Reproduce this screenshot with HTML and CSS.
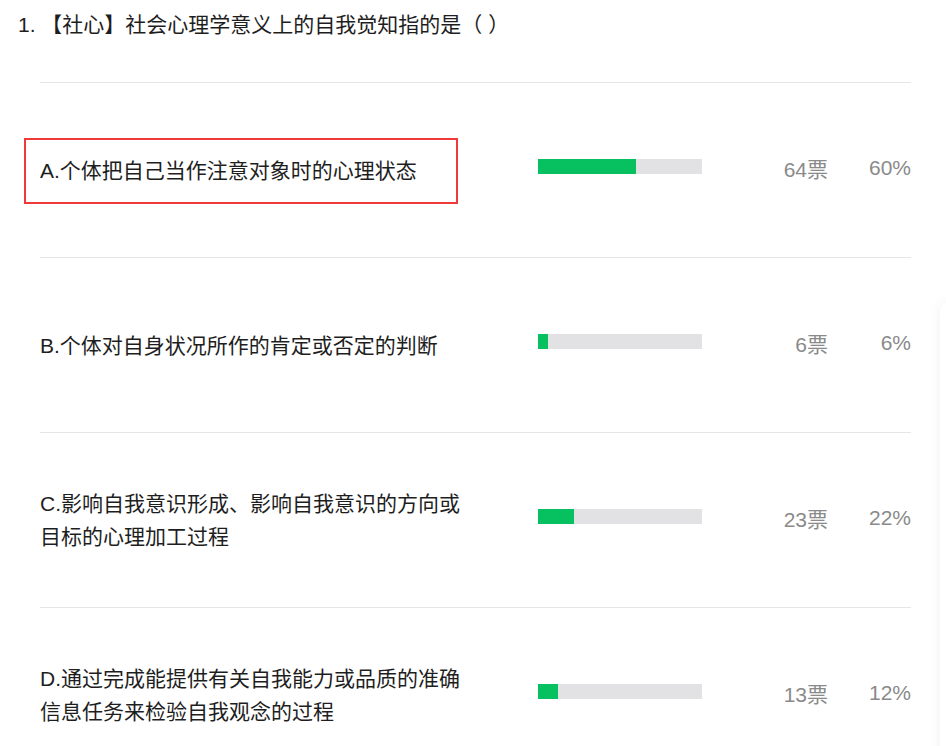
FILE: index.html
```html
<!DOCTYPE html>
<html lang="zh-CN">
<head>
  <meta charset="UTF-8">
  <title>投票结果</title>
  <link rel="stylesheet" href="styles.css">
</head>
<body>
  <div class="question">1. 【社心】社会心理学意义上的自我觉知指的是（ ）</div>

  <div class="options">
    <div class="option">
      <div class="highlight"></div>
      <div class="label">A.个体把自己当作注意对象时的心理状态</div>
      <div class="bar"><div class="fill" style="width: 60%"></div></div>
      <div class="votes">64票</div>
      <div class="percent">60%</div>
    </div>
    <div class="option">
      <div class="label">B.个体对自身状况所作的肯定或否定的判断</div>
      <div class="bar"><div class="fill" style="width: 6%"></div></div>
      <div class="votes">6票</div>
      <div class="percent">6%</div>
    </div>
    <div class="option">
      <div class="label">C.影响自我意识形成、影响自我意识的方向或目标的心理加工过程</div>
      <div class="bar"><div class="fill" style="width: 22%"></div></div>
      <div class="votes">23票</div>
      <div class="percent">22%</div>
    </div>
    <div class="option">
      <div class="label">D.通过完成能提供有关自我能力或品质的准确信息任务来检验自我观念的过程</div>
      <div class="bar"><div class="fill" style="width: 12%"></div></div>
      <div class="votes">13票</div>
      <div class="percent">12%</div>
    </div>
  </div>

  <div class="side-panel"></div>
</body>
</html>
```

FILE: styles.css
```css
body {
  margin: 0;
  padding: 8px 0 0 18px;
  font-family: "Liberation Sans", "Noto Sans CJK SC", sans-serif;
  color: #1e1e1e;
  background: #fff;
  overflow: hidden;
}

.question {
  font-size: 21px;
  line-height: 33px;
  margin-bottom: 41px;
}

.options {
  margin-left: 22px;
  width: 871px;
}

.option {
  position: relative;
  display: flex;
  align-items: center;
  box-sizing: border-box;
  height: 175px;
  border-top: 1px solid #e6e6e6;
}

.label {
  width: 420px;
  font-size: 21px;
  line-height: 33px;
  color: #1e1e1e;
}

.bar {
  margin-left: 78px;
  margin-bottom: 8px;
  width: 164px;
  height: 15px;
  background: #e2e2e4;
}

.fill {
  height: 100%;
  background: #07c160;
}

.votes,
.percent {
  text-align: right;
  font-size: 21px;
  color: #8a8a8a;
  padding-bottom: 5px;
}

.votes {
  width: 126px;
}

.percent {
  width: 83px;
}

.highlight {
  position: absolute;
  left: -16px;
  top: 55px;
  width: 430px;
  height: 62px;
  border: 2px solid #f03a3a;
}

.side-panel {
  position: absolute;
  left: 940px;
  top: 303px;
  width: 30px;
  height: 600px;
  background: #fff;
  border-radius: 8px;
  box-shadow: 0 0 14px rgba(0, 0, 0, 0.06);
}
```
